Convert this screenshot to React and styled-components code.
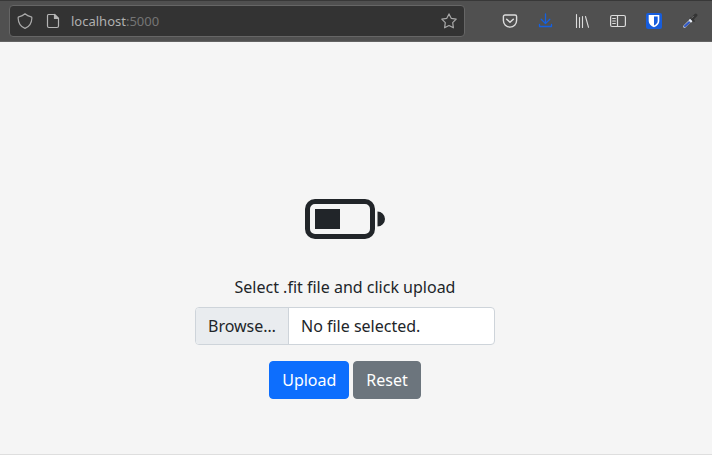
import React, { useState } from "react";
import styled, { createGlobalStyle } from "styled-components";

const GlobalStyle = createGlobalStyle`
  *, *::before, *::after { box-sizing: border-box; }
  body {
    margin: 0;
    background: #f5f5f5;
    color: #212529;
    font-family: "Noto Sans", "Liberation Sans", sans-serif;
    font-size: 16px;
    line-height: 24px;
  }
`;

const Page = styled.div`
  display: flex;
  flex-direction: column;
  min-height: 100vh;
`;

const Toolbar = styled.header`
  display: flex;
  align-items: center;
  gap: 27px;
  height: 42px;
  padding: 0 4px 0 9px;
  background: #505050;
  border-top: 1px solid #383838;
  border-bottom: 1px solid #636363;
`;

const AddressBar = styled.div`
  display: flex;
  flex: 1;
  align-items: center;
  min-width: 0;
  height: 32px;
  padding: 0 1px;
  background: #333333;
  border: 1px solid #666666;
  border-radius: 4px;
`;

const IconButton = styled.button`
  display: flex;
  flex: none;
  align-items: center;
  justify-content: center;
  width: ${(p) => (p.$compact ? 28 : 36)}px;
  height: 28px;
  padding: 0;
  border: 0;
  background: none;
  color: ${(p) => p.$color || "#dcdcdc"};
`;

const AddressField = styled.div`
  display: grid;
  flex: 1;
  min-width: 0;
  padding-left: 4px;
  font-size: 13px;
  line-height: 20px;

  > * { grid-area: 1 / 1; }
`;

const AddressInput = styled.input`
  width: 100%;
  padding: 0;
  border: 0;
  outline: 0;
  background: transparent;
  color: transparent;
  caret-color: #b5b5b5;
  font: inherit;
`;

const AddressText = styled.span`
  overflow: hidden;
  color: #b0b0b0;
  white-space: nowrap;
  pointer-events: none;
`;

const Port = styled.span`
  color: #757575;
`;

const Actions = styled.nav`
  display: flex;
  flex: none;
`;

const Main = styled.main`
  display: flex;
  flex: 1;
  flex-direction: column;
  align-items: center;
  padding: 137px 22px 55px 0;
  border-bottom: 1px solid #dedede;
`;

const BatteryIcon = styled.svg`
  width: 80px;
  height: 80px;
  margin-bottom: 16px;
  fill: currentColor;
`;

const UploadForm = styled.form`
  width: 100%;
  max-width: 300px;
  text-align: center;
`;

const FormLabel = styled.label`
  display: block;
  margin-bottom: 8px;
`;

const FilePicker = styled.div`
  position: relative;
  display: flex;
  height: 38px;
  margin-bottom: 16px;
  overflow: hidden;
  background: #ffffff;
  border: 1px solid #ced4da;
  border-radius: 4px;

  &:focus-within { border-color: #86b7fe; }
`;

const FileInput = styled.input`
  position: absolute;
  inset: 0;
  width: 100%;
  opacity: 0;
  cursor: pointer;
`;

const BrowseLabel = styled.span`
  flex: none;
  padding: 6px 12px;
  background: #e9ecef;
  border-right: 1px solid #ced4da;
`;

const FileName = styled.span`
  padding: 6px 12px;
  overflow: hidden;
  text-overflow: ellipsis;
  white-space: nowrap;
`;

const Buttons = styled.div`
  display: flex;
  justify-content: center;
  gap: 4px;
`;

const Button = styled.button`
  padding: 6px 12px;
  border: 1px solid ${(p) => p.$color};
  border-radius: 4px;
  background: ${(p) => p.$color};
  color: #ffffff;
  font: inherit;
  cursor: pointer;
`;

const Glyph = ({ children }) => (
  <svg
    width="16"
    height="16"
    viewBox="0 0 16 16"
    fill="none"
    stroke="currentColor"
    strokeWidth="1.2"
    strokeLinecap="round"
    strokeLinejoin="round"
    aria-hidden="true"
  >
    {children}
  </svg>
);

const ShieldIcon = () => (
  <Glyph>
    <path d="M8 .8C6.400 2.200 4 3.300 1.800 3.900 1.300 4.100 1.100 4.400 1.100 4.900 1.300 9.800 3.500 13.600 8 15.400 12.500 13.600 14.700 9.800 14.900 4.900 14.900 4.400 14.700 4.100 14.200 3.900 12 3.300 9.600 2.200 8 .8Z" />
  </Glyph>
);

const PageIcon = () => (
  <Glyph>
    <path d="M3.500 1.500H9.500L13.500 5.500V13A1.500 1.500 0 0 1 12 14.500H3.900A1.500 1.500 0 0 1 2.500 13V2.700A1.200 1.200 0 0 1 3.500 1.500Z" />
    <path d="M9.500 1.500V5.500H13.500Z" fill="currentColor" />
  </Glyph>
);

const StarIcon = () => (
  <Glyph>
    <path d="M8 .9 10.200 5.300 15.200 6.100 11.700 9.600 12.400 14.800 8 12.500 3.600 14.800 4.300 9.600.8 6.100 5.800 5.300Z" />
  </Glyph>
);

const PocketIcon = () => (
  <Glyph>
    <path d="M3 2H13A1.600 1.600 0 0 1 14.600 3.600V7.500A6.600 6.600 0 0 1 1.400 7.500V3.600A1.600 1.600 0 0 1 3 2Z" strokeWidth="1.400" />
    <path d="M4.700 6.200 8 9.300 11.300 6.200" strokeWidth="1.500" />
  </Glyph>
);

const DownloadIcon = () => (
  <Glyph>
    <path d="M7.500 1V10.500M3.200 6.300 7.500 10.600 11.800 6.300M1.500 11.500V13.500H13.500V11.500" strokeWidth="1.300" />
  </Glyph>
);

const LibraryIcon = () => (
  <Glyph>
    <path d="M2.500 1.500V14.500M5.500 4.500V14.500M8.500 3.500V14.500M11.500 3.500 14.500 14.300" strokeWidth="1.100" />
  </Glyph>
);

const SidebarIcon = () => (
  <Glyph>
    <rect x=".6" y="2.500" width="14.800" height="11" rx="1.500" />
    <path d="M7.500 2.500V13.500M2.700 5.500H5.300M2.700 8H5.300M2.700 10.500H5.300" />
  </Glyph>
);

const VaultIcon = () => (
  <Glyph>
    <rect width="16" height="16" rx="2" fill="#175ddc" stroke="none" />
    <path d="M2.700 2H13.300V8C13.300 11 11 12.900 8 14.300 5 12.900 2.700 11 2.700 8Z" fill="#fff" stroke="none" />
    <path d="M8 3.500H11.700V8C11.700 10 10.200 11.400 8 12.600Z" fill="#175ddc" stroke="none" />
  </Glyph>
);

const DropperIcon = () => (
  <Glyph>
    <path d="M2.500 13.500 8.500 7.500" stroke="#a9b2c4" strokeWidth="3" />
    <path d="M8 7.200 9.200 8.400" stroke="#e8edf5" strokeWidth="2" />
    <path d="M3 13 7 9.500" stroke="#3159c8" strokeWidth="2" />
    <path d="M9 5 12 8" stroke="#383838" strokeWidth="1.800" />
    <path d="M10.500 5.500 13.800 2.200" stroke="#343434" strokeWidth="3.200" />
    <path d="M9.500 5.200 11.500 3.200" stroke="#707070" strokeWidth="1" />
  </Glyph>
);

const tools = [
  { label: "Save to Pocket", icon: <PocketIcon /> },
  { label: "Downloads", icon: <DownloadIcon />, color: "#1560e0" },
  { label: "Library", icon: <LibraryIcon /> },
  { label: "Sidebars", icon: <SidebarIcon /> },
  { label: "Bitwarden", icon: <VaultIcon /> },
  { label: "Color picker", icon: <DropperIcon /> },
];

export default function App() {
  const [fileName, setFileName] = useState("");

  return (
    <Page>
      <GlobalStyle />
      <Toolbar>
        <AddressBar>
          <IconButton type="button" $compact $color="#a9a9a9" aria-label="Tracking protection">
            <ShieldIcon />
          </IconButton>
          <IconButton type="button" $compact $color="#b5b5b5" aria-label="Site information">
            <PageIcon />
          </IconButton>
          <AddressField>
            <AddressInput type="text" aria-label="Address" defaultValue="localhost:5000" readOnly />
            <AddressText aria-hidden="true">
              localhost<Port>:5000</Port>
            </AddressText>
          </AddressField>
          <IconButton type="button" $compact $color="#a9a9a9" aria-label="Bookmark this page">
            <StarIcon />
          </IconButton>
        </AddressBar>
        <Actions aria-label="Browser tools">
          {tools.map((tool) => (
            <IconButton key={tool.label} type="button" $color={tool.color} aria-label={tool.label}>
              {tool.icon}
            </IconButton>
          ))}
        </Actions>
      </Toolbar>
      <Main>
        <BatteryIcon viewBox="0 0 16 16" aria-hidden="true">
          <path d="M2 6h5v4H2V6z" />
          <path d="M2 4a2 2 0 0 0-2 2v4a2 2 0 0 0 2 2h10a2 2 0 0 0 2-2V6a2 2 0 0 0-2-2H2zm10 1a1 1 0 0 1 1 1v4a1 1 0 0 1-1 1H2a1 1 0 0 1-1-1V6a1 1 0 0 1 1-1h10zm4 3a1.5 1.5 0 0 1-1.5 1.5v-3A1.5 1.5 0 0 1 16 8z" />
        </BatteryIcon>
        <UploadForm
          onSubmit={(event) => event.preventDefault()}
          onReset={() => setFileName("")}
        >
          <FormLabel htmlFor="fit-file">Select .fit file and click upload</FormLabel>
          <FilePicker>
            <BrowseLabel aria-hidden="true">Browse…</BrowseLabel>
            <FileName>{fileName || "No file selected."}</FileName>
            <FileInput
              id="fit-file"
              type="file"
              accept=".fit"
              onChange={(event) => setFileName(event.target.files[0]?.name || "")}
            />
          </FilePicker>
          <Buttons>
            <Button type="submit" $color="#0d6efd">Upload</Button>
            <Button type="reset" $color="#6c757d">Reset</Button>
          </Buttons>
        </UploadForm>
      </Main>
    </Page>
  );
}
